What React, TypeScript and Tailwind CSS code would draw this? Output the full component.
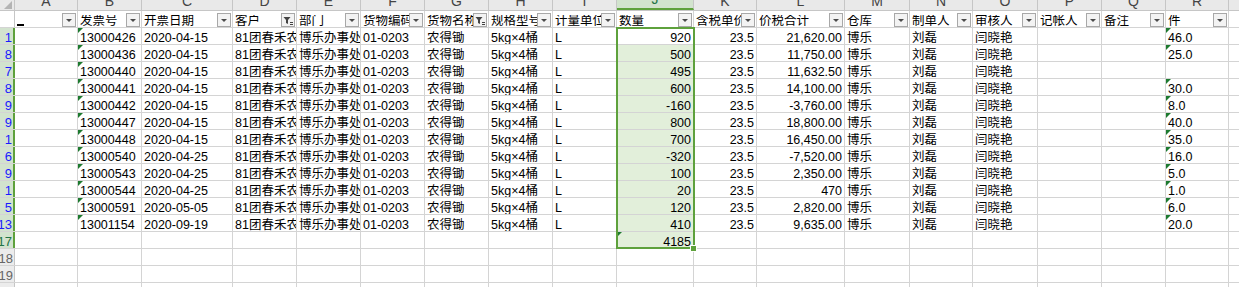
import React from "react";

const GRID = "border-[#d4d4d4]";
const GREEN = "#5ea13c";

const COLS: [string, number][] = [
  ["A", 63], ["B", 64], ["C", 91], ["D", 64], ["E", 64], ["F", 64], ["G", 64],
  ["H", 64], ["I", 64], ["J", 77], ["K", 63], ["L", 88], ["M", 65], ["N", 63],
  ["O", 65], ["P", 64], ["Q", 64], ["R", 63],
];

const HEADS = [
  "", "发票号", "开票日期", "客户", "部门", "货物编码", "货物名称", "规格型号", "计量单位",
  "数量", "含税单价", "价税合计", "仓库", "制单人", "审核人", "记帐人", "备注", "件",
];

const ROWNUMS = ["1", "8", "7", "8", "9", "9", "1", "6", "9", "1", "5", "13"];

const ROWS: [string, string, string, string, string][] = [
  ["13000426", "2020-04-15", "920", "21,620.00", "46.0"],
  ["13000436", "2020-04-15", "500", "11,750.00", "25.0"],
  ["13000440", "2020-04-15", "495", "11,632.50", ""],
  ["13000441", "2020-04-15", "600", "14,100.00", "30.0"],
  ["13000442", "2020-04-15", "-160", "-3,760.00", "8.0"],
  ["13000447", "2020-04-15", "800", "18,800.00", "40.0"],
  ["13000448", "2020-04-15", "700", "16,450.00", "35.0"],
  ["13000540", "2020-04-25", "-320", "-7,520.00", "16.0"],
  ["13000543", "2020-04-25", "100", "2,350.00", "5.0"],
  ["13000544", "2020-04-25", "20", "470", "1.0"],
  ["13000591", "2020-05-05", "120", "2,820.00", "6.0"],
  ["13001154", "2020-09-19", "410", "9,635.00", "20.0"],
];

const Tri = () => (
  <svg width="5" height="5" className="absolute top-0 left-0">
    <polygon points="0,0 5,0 0,5" fill="#1d7a2f" />
  </svg>
);

const FilterBtn = ({ active }: { active?: boolean }) => (
  <svg width="14" height="14" className="shrink-0 mr-[1px]">
    <rect x="0.5" y="0.5" width="13" height="13" fill="#f3f3f3" stroke="#a8a8a8" />
    {active ? (
      <g fill="#444">
        <polygon points="2.5,4 9.5,4 7,7 7,11 5,10 5,7" />
        <rect x="9" y="9" width="3" height="1" />
        <rect x="9" y="11" width="3" height="1" />
      </g>
    ) : (
      <polygon points="4,6 10,6 7,9" fill="#4a4a4a" />
    )}
  </svg>
);

type CellProps = {
  w: number;
  children?: React.ReactNode;
  right?: boolean;
  tri?: boolean;
  bg?: string;
};

const Cell = ({ w, children, right, tri, bg }: CellProps) => (
  <div
    style={{ width: w }}
    className={`relative shrink-0 h-full border-r ${GRID} flex items-end overflow-hidden whitespace-nowrap leading-[11px] ${
      right ? "justify-end pr-[2px]" : "pl-[2px]"
    } ${bg ?? ""}`}
  >
    {tri && <Tri />}
    {children}
  </div>
);

const RowHead = ({ label, sel, color }: { label: string; sel?: boolean; color: string }) => (
  <div
    className={`w-[15px] shrink-0 h-full flex items-end justify-end overflow-hidden leading-[12px] text-[13px] pr-[1px] ${
      sel ? "bg-[#d2e3ce] border-r-2 border-[#5ea13c]" : "bg-[#ececec] border-r border-[#c6c6c6]"
    } ${color}`}
  >
    {label}
  </div>
);

const DataRow = ({ n, r }: { n: number; r: [string, string, string, string, string] }) => {
  const vals = [
    "", r[0], r[1], "81团春禾农资", "博乐办事处", "01-0203", "农得锄", "5kg×4桶", "L",
    r[2], "23.5", r[3], "博乐", "刘磊", "闫晓艳", "", "", r[4],
  ];
  return (
    <div className={`flex h-[17px] border-b ${GRID}`}>
      <RowHead label={ROWNUMS[n]} sel color="text-[#1a1aff]" />
      {COLS.map(([k, w], i) => (
        <Cell
          key={k}
          w={w}
          right={k === "J" || k === "K" || k === "L"}
          tri={k === "B" || (k === "R" && r[4] !== "")}
          bg={k === "J" ? (n === 0 ? "bg-white" : "bg-[#e2efda]") : undefined}
        >
          {vals[i]}
        </Cell>
      ))}
      <div className="flex-1" />
    </div>
  );
};

const EmptyRow = ({ label, sel, total }: { label: string; sel?: boolean; total?: boolean }) => (
  <div className={`flex h-[17px] border-b ${GRID}`}>
    <RowHead label={label} sel={sel} color={sel ? "text-[#217346]" : "text-[#666]"} />
    {COLS.map(([k, w]) => (
      <Cell
        key={k}
        w={w}
        right={k === "J"}
        tri={total && k === "J"}
        bg={total && k === "J" ? "bg-[#e2efda]" : undefined}
      >
        {total && k === "J" ? "4185" : ""}
      </Cell>
    ))}
    <div className="flex-1" />
  </div>
);

export default function App() {
  return (
    <div className="relative w-[1239px] h-[287px] overflow-hidden bg-white text-black text-[12.5px] font-['Liberation_Sans','Noto_Sans_CJK_SC',sans-serif]">
      {/* column letters */}
      <div className="flex h-[11px] border-b border-[#c6c6c6] bg-[#e9e9e9] text-[14px] text-[#444]">
        <div className="w-[15px] shrink-0 h-full border-r border-[#c6c6c6] flex items-end justify-end">
          <svg width="8" height="8" className="mr-[2px] mb-[1px]">
            <polygon points="8,0 8,8 0,8" fill="#b4b4b4" />
          </svg>
        </div>
        {COLS.map(([k, w]) => (
          <div
            key={k}
            style={{ width: w }}
            className={`shrink-0 h-full border-r border-[#c6c6c6] flex items-end justify-center overflow-hidden leading-[13px] ${
              k === "J" ? "bg-[#d2e3ce] text-[#217346] border-b-2 border-b-[#5ea13c]" : ""
            }`}
          >
            <span className="mb-[2px]">{k}</span>
          </div>
        ))}
        <div className="flex-1 flex items-end justify-center leading-[13px]" />
      </div>

      {/* filter header row */}
      <div className={`flex h-[17px] border-b ${GRID}`}>
        <div className="w-[15px] shrink-0 h-full border-r border-[#c6c6c6] bg-white" />
        {COLS.map(([k, w], i) => (
          <div
            key={k}
            style={{ width: w }}
            className={`shrink-0 h-full border-r ${GRID} flex items-end overflow-hidden whitespace-nowrap leading-[12px]`}
          >
            <div className="flex-1 overflow-hidden pl-[2px] flex items-end">
              {k === "A" ? <div className="w-[7px] h-[2px] bg-black mb-[1px]" /> : HEADS[i]}
            </div>
            <FilterBtn active={k === "D" || k === "G"} />
          </div>
        ))}
        <div className="flex-1" />
      </div>

      {ROWS.map((r, n) => (
        <DataRow key={n} n={n} r={r} />
      ))}
      <EmptyRow label="17" sel total />
      <EmptyRow label="18" />
      <EmptyRow label="19" />
      <EmptyRow label="20" />

      {/* selection J2:J17 */}
      <div className="absolute left-[616px] top-[27px] w-[79px] h-[222px] border-2 border-[#5ea13c] pointer-events-none" />
      <div className="absolute left-[690px] top-[245px] w-[7px] h-[7px] bg-[#5ea13c] border border-white" />
    </div>
  );
}
